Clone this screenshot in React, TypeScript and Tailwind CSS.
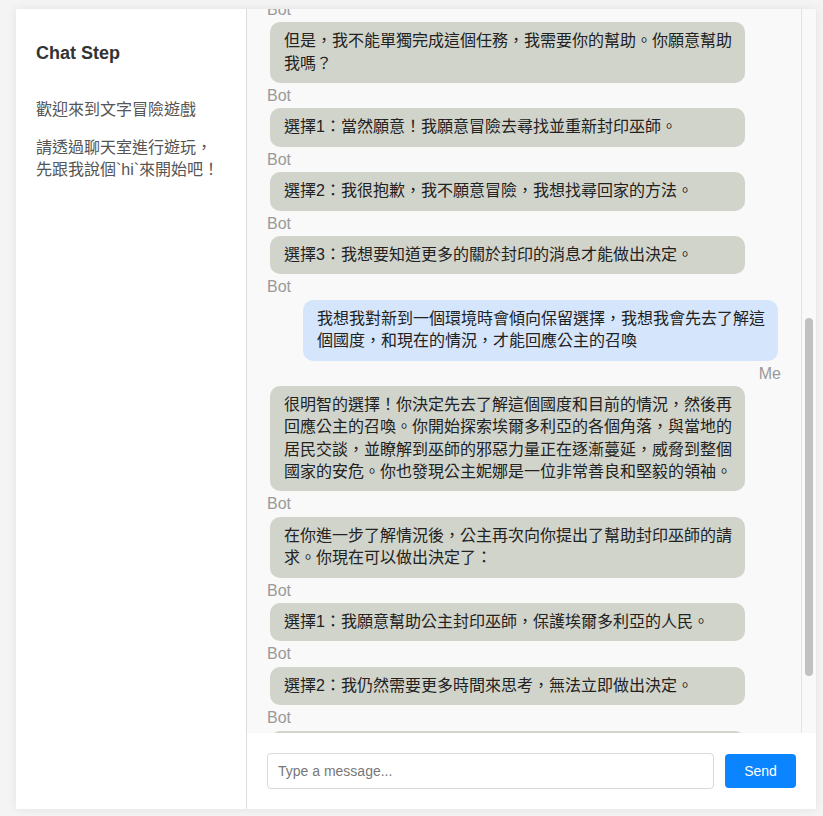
import { JSX, useLayoutEffect, useRef } from 'react'

type Message = { sender: 'bot' | 'me'; text: string; anchor?: boolean }

const messages: Message[] = [
  { sender: 'me', text: 'hi' },
  {
    sender: 'bot',
    text: '你好！歡迎來到文字冒險遊戲。在這個遊戲中，你將扮演一位意外來到異世界的旅人，你的每一個選擇都會影響故事的發展。準備好了嗎？',
  },
  { sender: 'me', text: '準備好了！' },
  {
    sender: 'bot',
    text: '你睜開眼睛，發現自己躺在一片陌生的草原上。遠方有一座宏偉的城堡，天空中飄著紫色的雲彩。一位穿著華麗長裙的少女走向你，她自稱是埃爾多利亞的公主妮娜，她的臉上帶著憂慮的神情。',
  },
  {
    sender: 'bot',
    text: '公主告訴你，數百年前被封印的邪惡巫師即將甦醒，整個王國正面臨前所未有的危機。根據古老的預言，只有來自異世界的人才能找到封印巫師的方法。',
  },
  {
    sender: 'bot',
    text: '「勇敢的旅人啊，」公主說道，「你就是預言中的那個人。我已經等待你很久了。只要你願意踏上旅程，王國的騎士和法師們都會成為你的後盾，我也會盡我所能地協助你完成這個使命。」',
  },
  {
    sender: 'bot',
    text: '但是，我不能單獨完成這個任務，我需要你的幫助。你願意幫助我嗎？',
    anchor: true,
  },
  { sender: 'bot', text: '選擇1：當然願意！我願意冒險去尋找並重新封印巫師。' },
  { sender: 'bot', text: '選擇2：我很抱歉，我不願意冒險，我想找尋回家的方法。' },
  { sender: 'bot', text: '選擇3：我想要知道更多的關於封印的消息才能做出決定。' },
  {
    sender: 'me',
    text: '我想我對新到一個環境時會傾向保留選擇，我想我會先去了解這個國度，和現在的情況，才能回應公主的召喚',
  },
  {
    sender: 'bot',
    text: '很明智的選擇！你決定先去了解這個國度和目前的情況，然後再回應公主的召喚。你開始探索埃爾多利亞的各個角落，與當地的居民交談，並瞭解到巫師的邪惡力量正在逐漸蔓延，威脅到整個國家的安危。你也發現公主妮娜是一位非常善良和堅毅的領袖。',
  },
  {
    sender: 'bot',
    text: '在你進一步了解情況後，公主再次向你提出了幫助封印巫師的請求。你現在可以做出決定了：',
  },
  { sender: 'bot', text: '選擇1：我願意幫助公主封印巫師，保護埃爾多利亞的人民。' },
  { sender: 'bot', text: '選擇2：我仍然需要更多時間來思考，無法立即做出決定。' },
  {
    sender: 'bot',
    text: '選擇3：我想先詢問公主更多關於巫師的弱點和封印儀式的細節，再做出決定。',
  },
]

function ChatMessage({ message, anchorRef }: { message: Message; anchorRef?: React.RefObject<HTMLDivElement | null> }): JSX.Element {
  const isMe = message.sender === 'me'
  return (
    <div className={`flex flex-col mb-px ${isMe ? 'items-end' : 'items-start'}`}>
      <div
        ref={anchorRef}
        className={`w-[475px] mx-[3px] rounded-[10px] pl-[14px] pr-[12px] py-2 text-base leading-[1.4] text-[#222] ${
          isMe ? 'bg-[#d4e5fc]' : 'bg-[#d1d4cb]'
        }`}
      >
        {message.text}
      </div>
      <span className="mt-[2px] text-base leading-[1.4] text-[#999]">{isMe ? 'Me' : 'Bot'}</span>
    </div>
  )
}

export default function App(): JSX.Element {
  const listRef = useRef<HTMLDivElement>(null)
  const anchorRef = useRef<HTMLDivElement>(null)

  useLayoutEffect(() => {
    const list = listRef.current
    const anchor = anchorRef.current
    if (list && anchor) {
      list.scrollTop = anchor.offsetTop - 13
    }
  }, [])

  return (
    <div
      className="min-h-screen bg-[#f4f4f4] pl-4 pt-[9px]"
      style={{ fontFamily: '"Liberation Sans", Arial, "Noto Sans CJK TC", sans-serif' }}
    >
      <div className="flex w-[800px] h-[800px] bg-white shadow-[0_0_10px_rgba(0,0,0,0.08)]">
        <aside className="w-[231px] shrink-0 border-r border-[#dddddd] bg-white px-5">
          <h2 className="mt-8 text-lg leading-6 font-bold text-[#333]">Chat Step</h2>
          <p className="mt-[34px] text-base leading-[22px] text-[#555]">歡迎來到文字冒險遊戲</p>
          <p className="mt-4 text-base leading-[22px] text-[#555]">
            請透過聊天室進行遊玩，
            <br />
            先跟我說個`hi`來開始吧！
          </p>
        </aside>

        <main className="flex flex-1 flex-col min-w-0">
          <div className="flex flex-1 min-h-0 bg-[#f9f9f9]">
            <div ref={listRef} className="relative flex-1 overflow-y-hidden p-5">
              {messages.map((message, index) => (
                <ChatMessage
                  key={index}
                  message={message}
                  anchorRef={message.anchor ? anchorRef : undefined}
                />
              ))}
            </div>
            {/* scrollbar */}
            <div className="w-[15px] shrink-0 border-l border-[#e3e3e3] bg-[#f9f9f9]">
              <div className="ml-[3px] mt-[309px] h-[358px] w-2 rounded-full bg-[#c1c1c1]" />
            </div>
          </div>

          <div className="flex items-center gap-[11px] bg-white p-5">
            <input
              type="text"
              placeholder="Type a message..."
              className="h-9 flex-1 rounded border border-[#d9d9d9] px-[10px] text-sm text-[#333] placeholder:text-[#777] outline-none"
            />
            <button className="h-[34px] w-[71px] rounded bg-[#0a84ff] text-sm text-white">Send</button>
          </div>
        </main>
      </div>
    </div>
  )
}
